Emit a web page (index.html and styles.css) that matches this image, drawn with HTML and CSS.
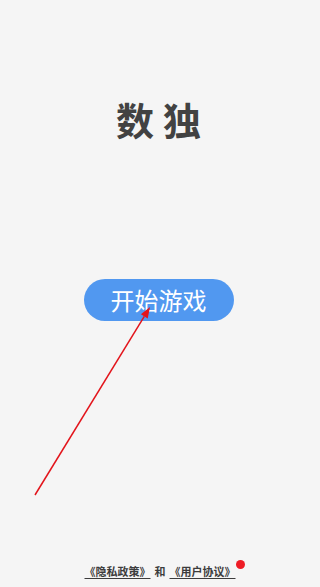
FILE: index.html
```html
<!DOCTYPE html>
<html lang="zh">
<head>
<meta charset="utf-8">
<title>数独</title>
<link rel="stylesheet" href="styles.css">
</head>
<body>
<div class="app">
  <h1 class="title"><span>数</span><span>独</span></h1>
  <button class="start">开始游戏</button>
  <div class="footer">
    <a class="link" href="#">《隐私政策》</a>
    <span class="and">和</span>
    <a class="link link-dot" href="#">《用户协议》<span class="dot"></span></a>
  </div>
  <svg class="arrow" width="320" height="587" viewBox="0 0 320 587">
    <line x1="35" y1="495" x2="144.3" y2="316.4" stroke="#e3141b" stroke-width="1.5"/>
    <polygon points="150,307 147.7,318.5 140.9,314.3" fill="#e3141b"/>
  </svg>
</div>
</body>
</html>
```
FILE: styles.css
```css
html, body {
  margin: 0;
  padding: 0;
  background: #f5f5f5;
}
.app {
  position: relative;
  width: 320px;
  height: 587px;
  display: flex;
  flex-direction: column;
  align-items: center;
  font-family: "Noto Sans CJK SC", "Noto Sans", sans-serif;
  overflow: hidden;
}
.title {
  margin: 100px 0 0 0;
  display: flex;
  gap: 9px;
  font-size: 38px;
  line-height: 38px;
  font-weight: 700;
  color: #424242;
  padding-right: 3px;
}
.start {
  margin-top: 141px;
  width: 150px;
  height: 42px;
  border: none;
  border-radius: 21px;
  background: #5198f0;
  color: #ffffff;
  font-family: "Noto Sans CJK SC", "Noto Sans", sans-serif;
  font-size: 24px;
  line-height: 42px;
  padding: 0;
  margin-left: -3px;
}
.footer {
  margin-top: auto;
  padding-bottom: 10px;
  display: flex;
  gap: 4px;
  font-size: 11px;
  line-height: 11px;
  font-weight: 700;
  color: #3c3c3c;
}
.link {
  color: #3c3c3c;
  text-decoration: underline;
  text-decoration-thickness: 1px;
  text-underline-offset: 2px;
}
.link-dot {
  position: relative;
}
.dot {
  position: absolute;
  right: -9px;
  top: -6px;
  width: 9px;
  height: 9px;
  border-radius: 50%;
  background: #ee1c25;
}
.arrow {
  position: absolute;
  left: 0;
  top: 0;
  pointer-events: none;
}
```
